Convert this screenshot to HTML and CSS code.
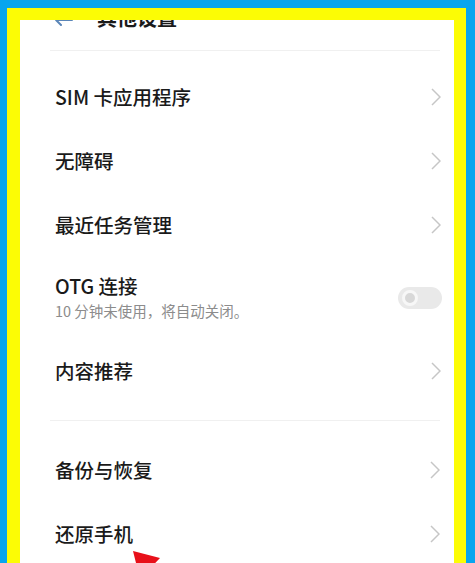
FILE: index.html
```html
<!DOCTYPE html>
<html lang="zh-CN">
<head>
    <meta charset="UTF-8">
    <meta name="viewport" content="width=device-width, initial-scale=1.0">
    <title>其他设置</title>
    <link rel="stylesheet" href="styles.css">
</head>
<body>
    <div class="screen">
        <div class="header">
            <svg class="back" width="20" height="20" viewBox="0 0 20 20">
                <path d="M2 14 H18 M2 14 L8 8 M2 14 L7 19" fill="none" stroke="#5b86b8" stroke-width="2" stroke-linecap="round"/>
            </svg>
            <span class="title">其他设置</span>
        </div>

        <div class="group">
            <div class="row">
                <span class="label">SIM 卡应用程序</span>
                <svg class="chevron" width="10" height="18" viewBox="0 0 10 18"><polyline points="1,1 9,9 1,17" fill="none" stroke="#c6c6c6" stroke-width="1.5"/></svg>
            </div>
            <div class="row">
                <span class="label">无障碍</span>
                <svg class="chevron" width="10" height="18" viewBox="0 0 10 18"><polyline points="1,1 9,9 1,17" fill="none" stroke="#c6c6c6" stroke-width="1.5"/></svg>
            </div>
            <div class="row">
                <span class="label">最近任务管理</span>
                <svg class="chevron" width="10" height="18" viewBox="0 0 10 18"><polyline points="1,1 9,9 1,17" fill="none" stroke="#c6c6c6" stroke-width="1.5"/></svg>
            </div>
            <div class="row tall">
                <div class="text">
                    <span class="label">OTG 连接</span>
                    <span class="sub">10 分钟未使用，将自动关闭。</span>
                </div>
                <div class="toggle"><span class="knob"></span></div>
            </div>
            <div class="row">
                <span class="label">内容推荐</span>
                <svg class="chevron" width="10" height="18" viewBox="0 0 10 18"><polyline points="1,1 9,9 1,17" fill="none" stroke="#c6c6c6" stroke-width="1.5"/></svg>
            </div>
        </div>

        <div class="group second">
            <div class="row">
                <span class="label">备份与恢复</span>
                <svg class="chevron" width="10" height="18" viewBox="0 0 10 18"><polyline points="1,1 9,9 1,17" fill="none" stroke="#c6c6c6" stroke-width="1.5"/></svg>
            </div>
            <div class="row">
                <span class="label">还原手机</span>
                <svg class="chevron" width="10" height="18" viewBox="0 0 10 18"><polyline points="1,1 9,9 1,17" fill="none" stroke="#c6c6c6" stroke-width="1.5"/></svg>
            </div>
        </div>
    </div>

    <!-- red pointer drawn over the screenshot -->
    <svg class="pointer" width="40" height="30" viewBox="0 0 40 30">
        <polygon points="1,1 28,8 8,29" fill="#e8101a"/>
    </svg>
</body>
</html>
```

FILE: styles.css
```css
html, body {
    margin: 0;
    height: 100%;
}

body {
    background-color: #08a5ee;
    padding: 8px 9px 0 7px;
    box-sizing: border-box;
    overflow: hidden;
    position: relative;
    font-family: "Noto Sans CJK SC", "Noto Sans", sans-serif;
    color: #1a1a1a;
}

.screen {
    height: 100%;
    box-sizing: border-box;
    background-color: #fff;
    border: 12px solid #fcfc05;
    border-left-width: 13px;
    border-bottom: none;
    overflow: hidden;
}

.header {
    height: 30px;
    margin: 0 14px 0 30px;
    border-bottom: 1px solid #f0f0f0;
    display: flex;
    align-items: flex-start;
}

.back {
    margin: -14px 0 0 4px;
}

.title {
    font-size: 20px;
    font-weight: 700;
    line-height: 22px;
    margin: -13px 0 0 23px;
}

.group {
    padding: 14px 0 0;
}

.group.second {
    margin: 17px 14px 0 30px;
    border-top: 1px solid #f0f0f0;
    padding-top: 17px;
}

.group.second .row {
    padding: 0 0 0 5px;
}

.row {
    height: 64px;
    padding: 0 13px 0 35px;
    display: flex;
    align-items: center;
    justify-content: space-between;
}

.row.tall {
    height: 82px;
}

.label {
    font-size: 19.5px;
    font-weight: 500;
    line-height: 28px;
}

.text {
    display: flex;
    flex-direction: column;
    margin-top: -2px;
}

.sub {
    font-size: 14.5px;
    line-height: 22px;
    color: #8c8c8c;
}

.toggle {
    width: 44px;
    height: 22px;
    border-radius: 11px;
    background-color: #e9e9e9;
    display: flex;
    align-items: center;
    padding-left: 4px;
    box-sizing: border-box;
    margin-right: -1px;
}

.knob {
    width: 10px;
    height: 10px;
    border-radius: 50%;
    background-color: #d8d8d8;
    border: 3px solid #f7f7f7;
}

.pointer {
    position: absolute;
    left: 132px;
    top: 550px;
}
```
